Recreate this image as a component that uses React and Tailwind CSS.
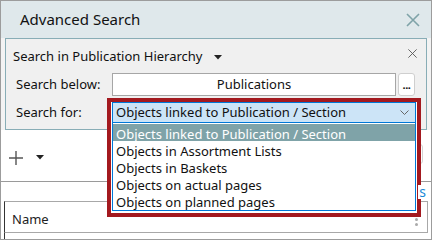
import { useState } from "react";

const OPTIONS = [
  "Objects linked to Publication / Section",
  "Objects in Assortment Lists",
  "Objects in Baskets",
  "Objects on actual pages",
  "Objects on planned pages",
];

const font = "font-['Noto_Sans','Liberation_Sans',sans-serif]";

function CloseIcon({ size, color, width }) {
  return (
    <svg width={size} height={size} viewBox="0 0 16 16">
      <path d="M2 2 L14 14 M14 2 L2 14" stroke={color} strokeWidth={width} fill="none" />
    </svg>
  );
}

function Caret({ className }) {
  return (
    <svg width="8" height="5" viewBox="0 0 8 5" className={className}>
      <path d="M0 0 H8 L4 4.5 Z" fill="#222" />
    </svg>
  );
}

function SearchForSelect() {
  const [selected] = useState(0);

  return (
    <div className="relative w-[304px]">
      {/* highlight frame around the open dropdown */}
      <div className="absolute -left-[5px] -right-[5px] -top-[4px] h-[119px] border-[4px] border-[#a3191f] bg-white" />
      <div className="relative h-[21px] border border-[#0078d7] bg-[#cce4f7] flex items-center justify-between pl-[3px] pr-[6px] text-[13px] text-[#111]">
        <span>{OPTIONS[selected]}</span>
        <svg width="9" height="5" viewBox="0 0 9 5">
          <path d="M0.5 0.5 L4.5 4.5 L8.5 0.5" stroke="#666" fill="none" />
        </svg>
      </div>
      <div className="absolute left-0 right-0 top-full border-x border-b border-[#0078d7] bg-white pt-[1px] pb-[1px]">
        {OPTIONS.map((opt, i) => (
          <div
            key={opt}
            className={`h-[17px] flex items-center pl-[3px] pt-[4px] text-[13px] leading-none ${
              i === selected ? "bg-[#7fa3a8] text-white" : "text-[#111]"
            }`}
          >
            {opt}
          </div>
        ))}
      </div>
    </div>
  );
}

export default function App() {
  return (
    <div className={`w-[432px] h-[240px] border border-[#9c9c9c] bg-white flex flex-col overflow-hidden ${font}`}>
      <div className="h-[37px] shrink-0 bg-[#dfe8eb] flex items-center justify-between pl-[19px] pr-[10px]">
        <span className="text-[15px] text-[#111]">Advanced Search</span>
        <CloseIcon size={16} color="#7fa3a8" width={1.6} />
      </div>

      <div className="pl-[4px] pr-[4px] bg-[#f3f3f3]">
        <div className="h-[92px] border border-[#88adb6] bg-[#f0f0f0] pl-[10px] pr-[8px] pt-[5px]">
          <div className="h-[26px] flex justify-between">
            <div className="flex items-center gap-[11px] -ml-[3px]">
              <span className="text-[13px] text-[#111]">Search in Publication Hierarchy</span>
              <Caret className="mt-[1px]" />
            </div>
            <div className="mt-[4px]">
              <CloseIcon size={11} color="#555" width={1.3} />
            </div>
          </div>

          <div className="mt-[3px] grid grid-cols-[96px_1fr] grid-rows-[23px_21px] gap-y-[6px] items-center text-[13px] text-[#111]">
            <span>Search below:</span>
            <div className="flex gap-[2px]">
              <div className="w-[284px] h-[23px] border border-[#a6a6a6] bg-white flex items-center justify-center">
                Publications
              </div>
              <div className="w-[17px] h-[23px] border border-[#cfcfcf] rounded-[3px] bg-white flex items-end justify-center pb-[5px]">
                <span className="text-[11px] font-bold leading-none tracking-[-0.5px]">...</span>
              </div>
            </div>
            <span>Search for:</span>
            <SearchForSelect />
          </div>
        </div>
      </div>

      <div className="h-[52px] shrink-0 flex items-center justify-between pl-[8px] pr-[8px] border-b border-[#9a9a9a]">
        <div className="flex items-center gap-[13px] mt-[4px]">
          <svg width="14" height="14" viewBox="0 0 14 14">
            <path d="M7 0 V14 M0 7 H14" stroke="#555" strokeWidth="1.4" />
          </svg>
          <Caret />
        </div>
        <div className="w-[40px] h-[20px] border border-[#d4d4d4] rounded-[3px] -mt-[4px]" />
      </div>

      <div className="h-[19px] shrink-0 flex items-center justify-end pr-[5px] relative z-10">
        <span className="text-[14px] leading-none text-[#1a88d6] bg-white pl-[1px]">s</span>
      </div>

      <div className="ml-[3px] mr-[3px] h-[32px] border-t border-r border-b border-[#a8a8a8] border-l border-l-[#333] flex items-center justify-between pl-[7px] pr-[9px]">
        <span className="text-[13px] text-[#222] mt-[5px]">Name</span>
        <div className="flex flex-col gap-[2px] mt-[4px]">
          <span className="w-[3px] h-[3px] rounded-full bg-[#aaa]" />
          <span className="w-[3px] h-[3px] rounded-full bg-[#aaa]" />
          <span className="w-[3px] h-[3px] rounded-full bg-[#aaa]" />
        </div>
      </div>
      <div className="ml-[3px] flex-1 border-l border-[#333]" />
    </div>
  );
}
